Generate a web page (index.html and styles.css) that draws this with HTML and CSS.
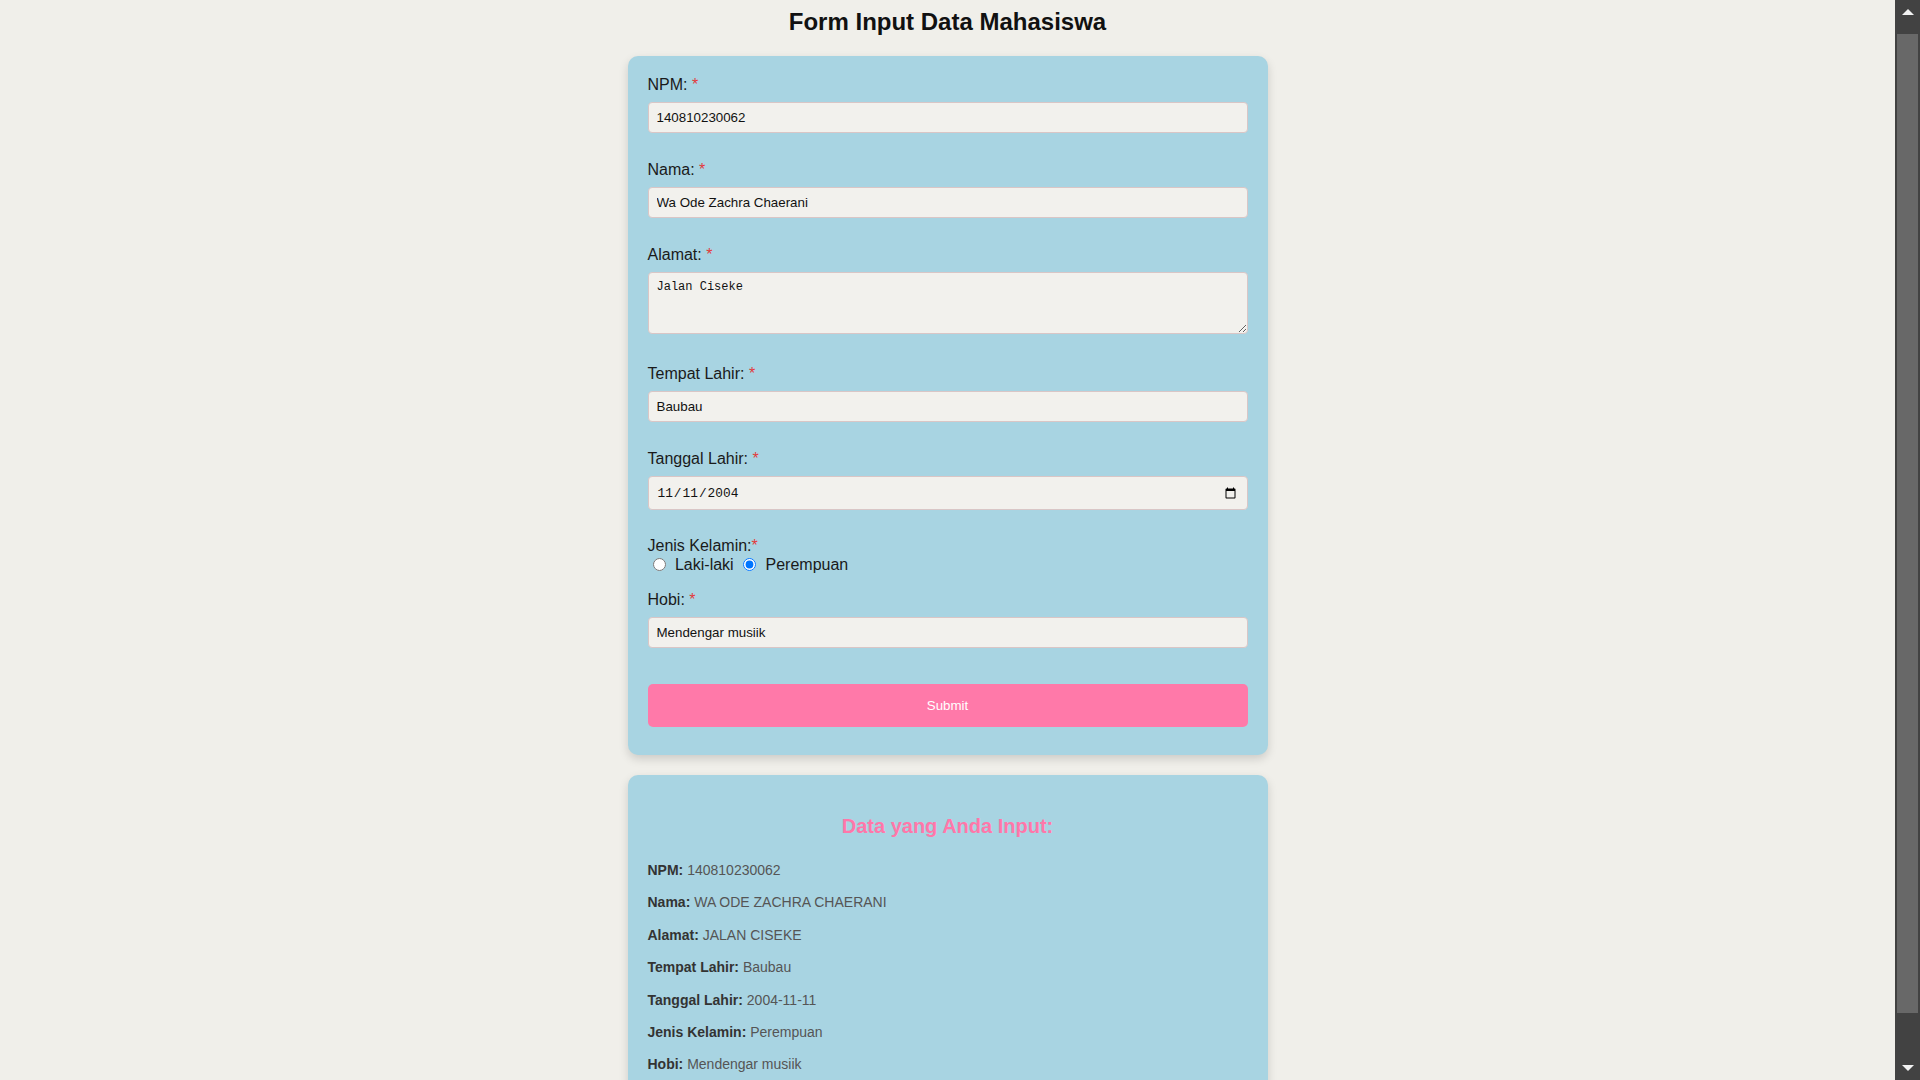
FILE: index.html
```html
<!DOCTYPE html>
<html lang="id">
<head>
<meta charset="utf-8">
<title>Form Input Data Mahasiswa</title>
<link rel="stylesheet" href="styles.css">
</head>
<body>
<h1 class="title">Form Input Data Mahasiswa</h1>
<div class="card form-card">
  <form class="form">
    <div class="field">
      <label class="label" for="npm">NPM: <span class="req">*</span></label>
      <input class="input" id="npm" type="text" value="140810230062">
    </div>
    <div class="field">
      <label class="label" for="nama">Nama: <span class="req">*</span></label>
      <input class="input" id="nama" type="text" value="Wa Ode Zachra Chaerani">
    </div>
    <div class="field field-textarea">
      <label class="label" for="alamat">Alamat: <span class="req">*</span></label>
      <textarea class="input textarea" id="alamat" rows="3">Jalan Ciseke</textarea>
    </div>
    <div class="field">
      <label class="label" for="tempat">Tempat Lahir: <span class="req">*</span></label>
      <input class="input" id="tempat" type="text" value="Baubau">
    </div>
    <div class="field field-date">
      <label class="label" for="tanggal">Tanggal Lahir: <span class="req">*</span></label>
      <input class="input date" id="tanggal" type="date" value="2004-11-11">
    </div>
    <div class="field field-radio">
      <span class="label label-tight">Jenis Kelamin:<span class="req">*</span></span>
      <div class="radios">
        <input class="radio" type="radio" name="jk" id="laki"> <label class="radio-label" for="laki">Laki-laki</label>
        <input class="radio" type="radio" name="jk" id="perempuan" checked> <label class="radio-label" for="perempuan">Perempuan</label>
      </div>
    </div>
    <div class="field">
      <label class="label" for="hobi">Hobi: <span class="req">*</span></label>
      <input class="input" id="hobi" type="text" value="Mendengar musiik">
    </div>
    <div class="actions">
      <button class="btn" type="button">Submit</button>
    </div>
  </form>
</div>
<div class="card result-card">
  <h3 class="result-title">Data yang Anda Input:</h3>
  <p class="row"><strong class="key">NPM:</strong> <span class="val">140810230062</span></p>
  <p class="row"><strong class="key">Nama:</strong> <span class="val">WA ODE ZACHRA CHAERANI</span></p>
  <p class="row"><strong class="key">Alamat:</strong> <span class="val">JALAN CISEKE</span></p>
  <p class="row"><strong class="key">Tempat Lahir:</strong> <span class="val">Baubau</span></p>
  <p class="row"><strong class="key">Tanggal Lahir:</strong> <span class="val">2004-11-11</span></p>
  <p class="row"><strong class="key">Jenis Kelamin:</strong> <span class="val">Perempuan</span></p>
  <p class="row"><strong class="key">Hobi:</strong> <span class="val">Mendengar musiik</span></p>
</div>
<div class="scrollbar" aria-hidden="true">
  <div class="sb-arrow sb-up"></div>
  <div class="sb-track"><div class="sb-thumb"></div></div>
  <div class="sb-arrow sb-down"></div>
</div>
</body>
</html>
```
FILE: styles.css
```css
html {
  background: #f0efea;
}
::-webkit-scrollbar {
  width: 0;
  height: 0;
}
body {
  margin: 0;
  padding: 8px 25px 12px 0;
  background: #f0efea;
  font-family: "Liberation Sans", Arial, sans-serif;
  color: #1a1a1a;
}
.title {
  margin: 0 0 20px;
  font-size: 24px;
  font-weight: bold;
  text-align: center;
  color: #111;
}
.card {
  width: 600px;
  margin: 0 auto 20px;
  padding: 20px;
  background: #a8d4e2;
  border-radius: 10px;
  box-shadow: 0 4px 10px rgba(0, 0, 0, 0.15);
}
.form {
  margin: 0;
}
.field {
  margin-bottom: 28px;
}
.field-textarea {
  margin-bottom: 31px;
}
.field-date {
  margin-bottom: 27px;
}
.field-radio {
  margin-bottom: 17px;
}
.label {
  display: block;
  margin-bottom: 8px;
  font-size: 16px;
  color: #1a1a1a;
}
.label-tight {
  margin-bottom: 0;
}
.req {
  color: #e23b3b;
}
.input {
  display: block;
  width: 100%;
  box-sizing: border-box;
  margin: 0;
  padding: 7px 8px;
  font-family: "Liberation Sans", Arial, sans-serif;
  font-size: 13.33px;
  line-height: 15px;
  color: #111;
  background: #f2f1ed;
  border: 1px solid #d9c6c6;
  border-radius: 4px;
  outline: none;
}
.textarea {
  height: 62px;
  font-family: "Liberation Mono", "DejaVu Sans Mono", monospace;
  font-size: 12px;
  line-height: 15.33px;
}
.date {
  font-family: "Liberation Mono", "DejaVu Sans Mono", monospace;
  font-size: 12.8px;
  height: 34px;
}
.radios {
  font-size: 16px;
  line-height: 18px;
}
.radio {
  margin: 3px 5px 0 5px;
  width: 13px;
  height: 13px;
  vertical-align: -1px;
}
.radio-label {
  color: #1a1a1a;
}
.actions {
  padding: 8px 0 8px;
}
.btn {
  display: block;
  width: 100%;
  padding: 14px;
  font-family: "Liberation Sans", Arial, sans-serif;
  font-size: 13.33px;
  line-height: 15px;
  color: #ffffff;
  background: #ff79a9;
  border: none;
  border-radius: 5px;
}
.result-title {
  margin: 20px 0 24px;
  font-size: 20px;
  font-weight: bold;
  text-align: center;
  color: #ff77a9;
}
.row {
  margin: 16.4px 0;
  font-size: 14px;
  color: #555;
}
.key {
  color: #333;
}
.val {
  color: #555;
}
.scrollbar {
  position: fixed;
  top: 0;
  right: 0;
  width: 25px;
  height: 100vh;
  display: flex;
  flex-direction: column;
  background: #424242;
}
.sb-arrow {
  height: 32px;
  flex: none;
  display: flex;
  justify-content: center;
}
.sb-up {
  align-items: flex-start;
}
.sb-down {
  align-items: flex-end;
}
.sb-up::before {
  content: "";
  margin-top: 9px;
  border-left: 6px solid transparent;
  border-right: 6px solid transparent;
  border-bottom: 6px solid #f2f2f2;
}
.sb-down::before {
  content: "";
  margin-bottom: 9px;
  border-left: 6px solid transparent;
  border-right: 6px solid transparent;
  border-top: 6px solid #f2f2f2;
}
.sb-track {
  flex: 1;
  padding: 2px 2px 0;
}
.sb-thumb {
  height: 979px;
  background: #686868;
}
```
